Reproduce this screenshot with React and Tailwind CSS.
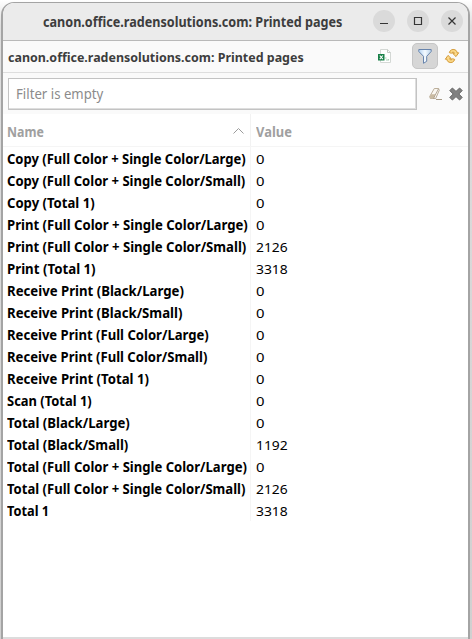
import { useLayoutEffect, useRef } from 'react';

const rows = [
  ['Copy (Full Color + Single Color/Large)', '0', 239],
  ['Copy (Full Color + Single Color/Small)', '0', 238],
  ['Copy (Total 1)', '0', 88],
  ['Print (Full Color + Single Color/Large)', '0', 241],
  ['Print (Full Color + Single Color/Small)', '2126', 239],
  ['Print (Total 1)', '3318', 89],
  ['Receive Print (Black/Large)', '0', 177],
  ['Receive Print (Black/Small)', '0', 175],
  ['Receive Print (Full Color/Large)', '0', 202],
  ['Receive Print (Full Color/Small)', '0', 200],
  ['Receive Print (Total 1)', '0', 142],
  ['Scan (Total 1)', '0', 85],
  ['Total (Black/Large)', '0', 123],
  ['Total (Black/Small)', '1192', 121],
  ['Total (Full Color + Single Color/Large)', '0', 240],
  ['Total (Full Color + Single Color/Small)', '2126', 238],
  ['Total 1', '3318', 42],
];

// Condenses a label horizontally so that it fills exactly the given width.
function Fit({ width, className = '', children }) {
  const ref = useRef(null);
  useLayoutEffect(() => {
    const el = ref.current;
    el.style.transform = `scaleX(${width / el.offsetWidth})`;
  }, [width]);
  return (
    <span className="block shrink-0" style={{ width }}>
      <span ref={ref} className={`inline-block origin-left whitespace-nowrap ${className}`}>
        {children}
      </span>
    </span>
  );
}

function RoundButton({ children }) {
  return (
    <button className="flex size-[22px] items-center justify-center rounded-full bg-[#dadada]">
      <svg width="22" height="22" viewBox="0 0 22 22" fill="none" stroke="#353535" strokeWidth="1.2">
        {children}
      </svg>
    </button>
  );
}

function SheetIcon() {
  return (
    <svg width="16" height="16" viewBox="0 0 16 16">
      <path d="M3.5 1.5h7l3 3v10h-10z" fill="#fff" stroke="#d4d8d5" />
      <path d="M10.5 1.5v3h3" fill="none" stroke="#c4c9c5" />
      <path d="M8 10h1.5M9 12h2M11.5 11v1.5" stroke="#a9cfb5" />
      <rect x="1" y="6" width="6.5" height="6.5" fill="#188048" />
      <path d="M2.8 7.5l3 3.7M5.8 7.5l-3 3.7" stroke="#fff" strokeWidth="1.1" />
    </svg>
  );
}

function FunnelIcon() {
  return (
    <svg width="16" height="16" viewBox="0 0 16 16">
      <defs>
        <linearGradient id="funnel" x1="0" x2="1">
          <stop offset="0" stopColor="#b5d4f3" />
          <stop offset=".5" stopColor="#f4faff" />
          <stop offset="1" stopColor="#b9d3ec" />
        </linearGradient>
      </defs>
      <path d="M1.8 1.5h12.4v2L9.7 8.3v5L6.5 15.3v-7L1.8 3.5z" fill="url(#funnel)" stroke="#6884ac" strokeLinejoin="round" />
    </svg>
  );
}

function RefreshIcon() {
  return (
    <svg width="16" height="16" viewBox="0 0 16 16" fill="#fbd98a" stroke="#cf922a" strokeWidth=".9" strokeLinejoin="round">
      <path d="M5.3 4.6C6 2 8.4.8 11 1.8c1.3.5 2 1.7 2.1 3h1.6L12 8.6 8.6 5.3l1.9-.2C9.7 3.8 8 3.9 7.5 5.3z" />
      <path d="M10.7 11.4c-.7 2.6-3.1 3.8-5.7 2.8-1.3-.5-2-1.7-2.1-3H1.3L4 7.4l3.4 3.3-1.9.2c.8 1.3 2.5 1.2 3-.2z" />
    </svg>
  );
}

function EraserIcon() {
  return (
    <svg width="16" height="16" viewBox="0 0 16 16" strokeLinejoin="round">
      <path d="M6.3 2.5h4.2l.8 1.7-3.6 8.3H2.3l-.6-2z" fill="#faf7f1" stroke="#b3a590" strokeWidth=".9" />
      <path d="M3 8.2h4.2l-1.7 4.3H2.3l-.6-1.7z" fill="#c9baa1" />
      <path d="M10.6 2.7L7.2 9l-1.6 3.5" fill="none" stroke="#a0927d" strokeWidth=".8" />
      <path d="M8 13.5h6" stroke="#a89b87" />
    </svg>
  );
}

function ClearIcon() {
  return (
    <svg width="16" height="16" viewBox="0 0 16 16">
      <path d="M4.4 2L8 5.4 11.6 2 14.2 4.6 10.8 8l3.4 3.4-2.6 2.6L8 10.6 4.4 14l-2.6-2.6L5.2 8 1.8 4.6z" fill="#808080" stroke="#646464" strokeLinejoin="round" />
    </svg>
  );
}

export default function App() {
  return (
    <div className="h-[639px] w-[472px] overflow-hidden bg-[#ededed] bg-gradient-to-b from-white via-[#dedede] via-[4%] to-[#d0d0d0] pt-[2px] pr-[2px] pl-[1px] font-['Noto_Sans',sans-serif]">
      <div className="flex h-[637px] flex-col overflow-hidden rounded-t-[13px] border-x-2 border-t border-[#a4a4a4] bg-white">
        <header className="flex h-[38px] shrink-0 items-center border-b border-[#b9b9b9] bg-[#ebebeb] pl-[40px]">
          <Fit width={299} className="-translate-y-px text-[14px] font-bold leading-[20px] text-[#3d3d3d]">
            canon.office.radensolutions.com: Printed pages
          </Fit>
          <div className="ml-[31px] flex -translate-y-px gap-[12px]">
            <RoundButton><path d="M7 13.5h8" /></RoundButton>
            <RoundButton><path d="M7.5 7.5h7v7h-7z" /></RoundButton>
            <RoundButton><path d="M7.5 7.5l7 7M14.5 7.5l-7 7" /></RoundButton>
          </div>
        </header>

        <div className="flex h-[32px] shrink-0 items-center border-b border-[#dedede] bg-[#fafafa] pb-[2px] pl-[5px]">
          <Fit width={296} className="mb-px text-[13px] font-bold leading-[20px] text-[#3d3d3d]">
            canon.office.radensolutions.com: Printed pages
          </Fit>
          <div className="ml-[73px] flex items-center">
            <SheetIcon />
            <button className="ml-[19px] flex size-[26px] items-center justify-center rounded-[5px] border border-[#c6c6c6] bg-[#d6d6d6]">
              <FunnelIcon />
            </button>
            <span className="ml-[6px]"><RefreshIcon /></span>
          </div>
        </div>

        <div className="flex h-[41px] shrink-0 items-center bg-[#fafafa] pl-[5px]">
          <div className="flex h-[32px] w-[409px] items-center border border-[#c3c3c3] bg-white pb-[2px] pl-[7px] shadow-[inset_-1px_-1px_0_#dedede]">
            <Fit width={87} className="text-[13.5px] leading-[20px] text-[#8b8b8b]">Filter is empty</Fit>
          </div>
          <span className="ml-[11px]"><EraserIcon /></span>
          <span className="ml-[4px]"><ClearIcon /></span>
        </div>

        <div className="flex h-[33px] shrink-0 border-b border-[#f5f5f5] text-[14px] font-bold text-[#a0a0a0]">
          <div className="flex w-[248px] items-center justify-between border-r border-[#f2f2f2] pt-[2px] pr-[5px] pl-[4px]">
            <Fit width={37}>Name</Fit>
            <svg width="13" height="8" viewBox="0 0 13 8" fill="none" stroke="#9b9b9b">
              <path d="M1.5 6.5l5-5 5 5" />
            </svg>
          </div>
          <div className="flex items-center pt-[2px] pl-[5px]">
            <Fit width={36}>Value</Fit>
          </div>
        </div>

        <div className="text-black">
          {rows.map(([name, value, width]) => (
            <div key={name} className="flex h-[22px]">
              <div className="flex w-[248px] items-center border-r border-[#f5f5f5] pl-[4px]">
                <Fit width={width} className="text-[14px] font-bold leading-[22px]">{name}</Fit>
              </div>
              <div className="flex items-center pl-[5px]">
                <Fit width={value.length * 8} className="text-[13px] leading-[22px]">{value}</Fit>
              </div>
            </div>
          ))}
        </div>
        <div className="mt-auto h-[2px] bg-[#dcdcdc]" />
      </div>
    </div>
  );
}
